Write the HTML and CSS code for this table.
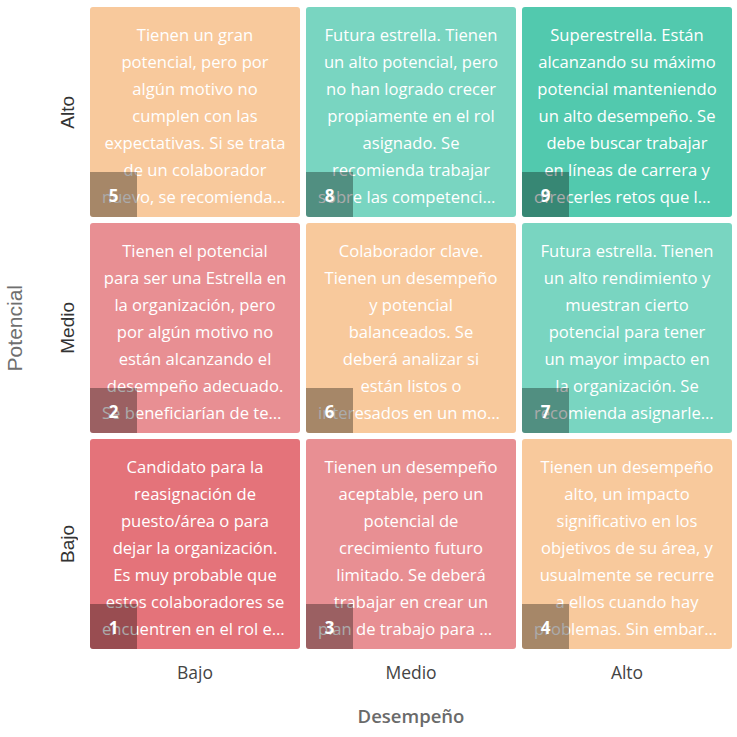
FILE: index.html
```html
<!DOCTYPE html>
<html lang="es">
<head>
<meta charset="utf-8">
<title>Matriz 9 Box</title>
<link rel="stylesheet" href="styles.css">
</head>
<body>
<div class="chart">
  <div class="y-title"><span>Potencial</span></div>
  <div class="y-ticks">
    <div class="y-tick"><span>Alto</span></div>
    <div class="y-tick"><span>Medio</span></div>
    <div class="y-tick"><span>Bajo</span></div>
  </div>
  <div class="matrix">
    <div class="cell orange"><p class="desc">Tienen un gran<br>potencial, pero por<br>algún motivo no<br>cumplen con las<br>expectativas. Si se trata<br>de un colaborador<br>nuevo, se recomienda darle tiempo para adaptarse.</p><span class="badge">5</span></div>
    <div class="cell teal"><p class="desc">Futura estrella. Tienen<br>un alto potencial, pero<br>no han logrado crecer<br>propiamente en el rol<br>asignado. Se<br>recomienda trabajar<br>sobre las competencias que requieren desarrollo.</p><span class="badge">8</span></div>
    <div class="cell green"><p class="desc">Superestrella. Están<br>alcanzando su máximo<br>potencial manteniendo<br>un alto desempeño. Se<br>debe buscar trabajar<br>en líneas de carrera y<br>ofrecerles retos que los mantengan motivados.</p><span class="badge">9</span></div>
    <div class="cell pink"><p class="desc">Tienen el potencial<br>para ser una Estrella en<br>la organización, pero<br>por algún motivo no<br>están alcanzando el<br>desempeño adecuado.<br>Se beneficiarían de temas de coaching.</p><span class="badge">2</span></div>
    <div class="cell orange"><p class="desc">Colaborador clave.<br>Tienen un desempeño<br>y potencial<br>balanceados. Se<br>deberá analizar si<br>están listos o<br>interesados en un movimiento dentro de la organización.</p><span class="badge">6</span></div>
    <div class="cell teal"><p class="desc">Futura estrella. Tienen<br>un alto rendimiento y<br>muestran cierto<br>potencial para tener<br>un mayor impacto en<br>la organización. Se<br>recomienda asignarles nuevos retos.</p><span class="badge">7</span></div>
    <div class="cell red"><p class="desc">Candidato para la<br>reasignación de<br>puesto/área o para<br>dejar la organización.<br>Es muy probable que<br>estos colaboradores se<br>encuentren en el rol equivocado.</p><span class="badge">1</span></div>
    <div class="cell pink"><p class="desc">Tienen un desempeño<br>aceptable, pero un<br>potencial de<br>crecimiento futuro<br>limitado. Se deberá<br>trabajar en crear un<br>plan de trabajo para mejorar su desempeño.</p><span class="badge">3</span></div>
    <div class="cell orange"><p class="desc">Tienen un desempeño<br>alto, un impacto<br>significativo en los<br>objetivos de su área, y<br>usualmente se recurre<br>a ellos cuando hay<br>problemas. Sin embargo, su potencial es limitado.</p><span class="badge">4</span></div>
  </div>
  <div class="x-ticks">
    <div class="x-tick">Bajo</div>
    <div class="x-tick">Medio</div>
    <div class="x-tick">Alto</div>
  </div>
  <div class="x-title">Desempeño</div>
</div>
</body>
</html>
```

FILE: styles.css
```css
* { box-sizing: border-box; }
html, body { margin: 0; padding: 0; background: #fff; }
body { font-family: "Open Sans", "Noto Sans", sans-serif; }

.chart {
  display: grid;
  grid-template-columns: 30px 60px 642px;
  grid-template-rows: 642px 46px 48px;
  padding-top: 7px;
}

.y-title {
  grid-column: 1;
  grid-row: 1;
  display: flex;
  align-items: center;
  justify-content: center;
}
.y-title span {
  writing-mode: vertical-rl;
  transform: rotate(180deg);
  font-family: "Liberation Sans", Arial, sans-serif;
  font-size: 21px;
  color: #6f6f6f;
}

.y-ticks {
  grid-column: 2;
  grid-row: 1;
  display: grid;
  grid-template-rows: repeat(3, 1fr);
  row-gap: 6px;
  padding-left: 16px;
}
.y-tick {
  display: flex;
  align-items: center;
  justify-content: center;
}
.y-tick span {
  writing-mode: vertical-rl;
  transform: rotate(180deg);
  font-family: "Liberation Sans", Arial, sans-serif;
  font-size: 19px;
  color: #333;
}

.matrix {
  grid-column: 3;
  grid-row: 1;
  display: grid;
  grid-template-columns: repeat(3, 210px);
  grid-template-rows: repeat(3, 210px);
  gap: 6px;
}

.cell {
  position: relative;
  border-radius: 3px;
  overflow: hidden;
  padding: 14px 12px 0;
}
.orange { background: #f8c99c; }
.teal { background: #79d5c1; }
.green { background: #52c9ae; }
.pink { background: #e88f93; }
.red { background: #e4737a; }

.desc {
  margin: 0;
  color: #fff;
  font-size: 16.6px;
  line-height: 27px;
  text-align: center;
  white-space: nowrap;
  overflow: hidden;
  text-overflow: ellipsis;
}

.badge {
  position: absolute;
  left: 0;
  bottom: 0;
  width: 47px;
  height: 45px;
  background: rgba(0, 0, 0, 0.33);
  color: #fff;
  font-weight: 700;
  font-size: 17px;
  line-height: 20px;
  padding-top: 14px;
  text-align: center;
}

.x-ticks {
  grid-column: 3;
  grid-row: 2;
  display: grid;
  grid-template-columns: repeat(3, 210px);
  column-gap: 6px;
  align-items: center;
}
.x-tick {
  text-align: center;
  font-size: 17.5px;
  color: #444;
}

.x-title {
  grid-column: 3;
  grid-row: 3;
  text-align: center;
  font-size: 18.5px;
  font-weight: 600;
  color: #6a6a6a;
  padding-top: 8px;
}
```
